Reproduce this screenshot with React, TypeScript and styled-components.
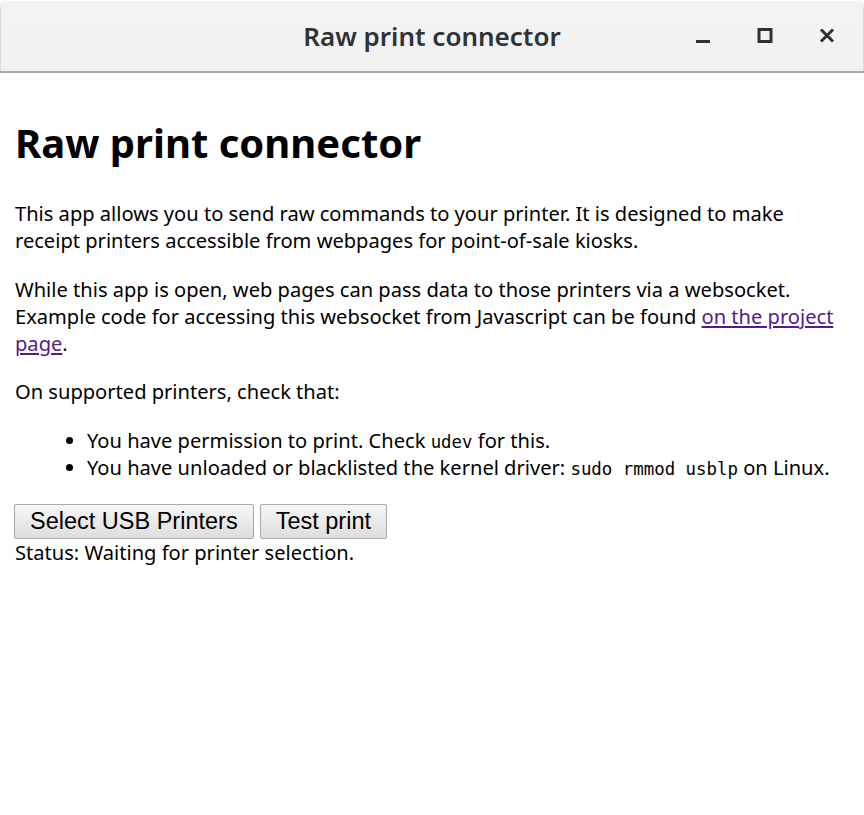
import React from "react";
import styled, { createGlobalStyle } from "styled-components";

const Global = createGlobalStyle`
  html, body { margin: 0; padding: 0; background: #ffffff; }
  body { font-family: "Noto Sans", "DejaVu Sans", sans-serif; }
`;

const Window = styled.div`
  width: 864px;
  height: 815px;
  display: flex;
  flex-direction: column;
  background: #ffffff;
  overflow: hidden;
`;

const TitleBar = styled.header`
  height: 71px;
  flex: none;
  display: grid;
  grid-template-columns: 1fr auto 1fr;
  align-items: center;
  background: linear-gradient(#f4f4f4, #f1f1f1);
  border-bottom: 2px solid #a8a8a8;
  border-radius: 7px 7px 0 0;
  box-shadow: inset 0 1px 0 #ffffff, inset 1px 0 0 #d8d8d8, inset -1px 0 0 #d8d8d8;
`;

const Title = styled.h2`
  grid-column: 2;
  margin: 0;
  font-family: "Noto Sans", sans-serif;
  font-weight: 600;
  font-size: 26px;
  color: #2e3436;
  letter-spacing: 0;
`;

const Controls = styled.div`
  grid-column: 3;
  justify-self: end;
  display: flex;
  align-items: center;
  padding-right: 6px;
`;

const ControlButton = styled.span`
  width: 62px;
  height: 30px;
  display: flex;
  align-items: center;
  justify-content: center;
  color: #2e3436;
`;

const Content = styled.main`
  padding: 0 15px;
  color: #000000;
  font-size: 20.1px;
  line-height: 27px;
`;

const Heading = styled.h1`
  margin: 44px 0 31px;
  font-size: 40px;
  line-height: 52px;
  font-weight: 700;
`;

const Para = styled.p`
  margin: 0 0 21.5px;
`;

const Link = styled.a`
  color: #551a8b;
  text-decoration: underline;
`;

const Code = styled.code`
  font-family: "DejaVu Sans Mono", monospace;
  font-size: 17.4px;
  line-height: 1;
`;

const List = styled.ul`
  margin: 21.5px 0 23px;
  padding-left: 72px;
`;

const Item = styled.li`
  line-height: 27px;
`;

const ButtonRow = styled.div`
  display: flex;
  gap: 6px;
  margin-left: -1px;
`;

const PushButton = styled.button`
  height: 35px;
  padding: 0 15px;
  font-family: "Liberation Sans", Arial, sans-serif;
  font-size: 23.5px;
  color: #000;
  background: linear-gradient(#f6f6f6, #dedede);
  border: 1px solid #a9a9a9;
  border-radius: 2px;
`;

const Status = styled.div``;

function MinIcon() {
  return (
    <svg width="16" height="16" viewBox="0 0 16 16">
      <rect x="1" y="12" width="14" height="3" fill="currentColor" />
    </svg>
  );
}
function MaxIcon() {
  return (
    <svg width="16" height="16" viewBox="0 0 16 16">
      <rect x="2" y="1.5" width="12" height="12" fill="none" stroke="currentColor" strokeWidth="3" />
    </svg>
  );
}
function CloseIcon() {
  return (
    <svg width="16" height="16" viewBox="0 0 16 16">
      <path d="M2 1.5 L14 13.5 M14 1.5 L2 13.5" stroke="currentColor" strokeWidth="3" />
    </svg>
  );
}

export default function App() {
  return (
    <Window>
      <Global />
      <TitleBar>
        <Title>Raw print connector</Title>
        <Controls>
          <ControlButton><MinIcon /></ControlButton>
          <ControlButton><MaxIcon /></ControlButton>
          <ControlButton><CloseIcon /></ControlButton>
        </Controls>
      </TitleBar>
      <Content>
        <Heading>Raw print connector</Heading>
        <Para>
          This app allows you to send raw commands to your printer. It is designed to make
          receipt printers accessible from webpages for point-of-sale kiosks.
        </Para>
        <Para>
          While this app is open, web pages can pass data to those printers via a websocket.
          Example code for accessing this websocket from Javascript can be found{" "}
          <Link href="#">on the project page</Link>.
        </Para>
        <Para>On supported printers, check that:</Para>
        <List>
          <Item>You have permission to print. Check <Code>udev</Code> for this.</Item>
          <Item>
            You have unloaded or blacklisted the kernel driver: <Code>sudo rmmod usblp</Code> on Linux.
          </Item>
        </List>
        <ButtonRow>
          <PushButton>Select USB Printers</PushButton>
          <PushButton>Test print</PushButton>
        </ButtonRow>
        <Status>Status: Waiting for printer selection.</Status>
      </Content>
    </Window>
  );
}
